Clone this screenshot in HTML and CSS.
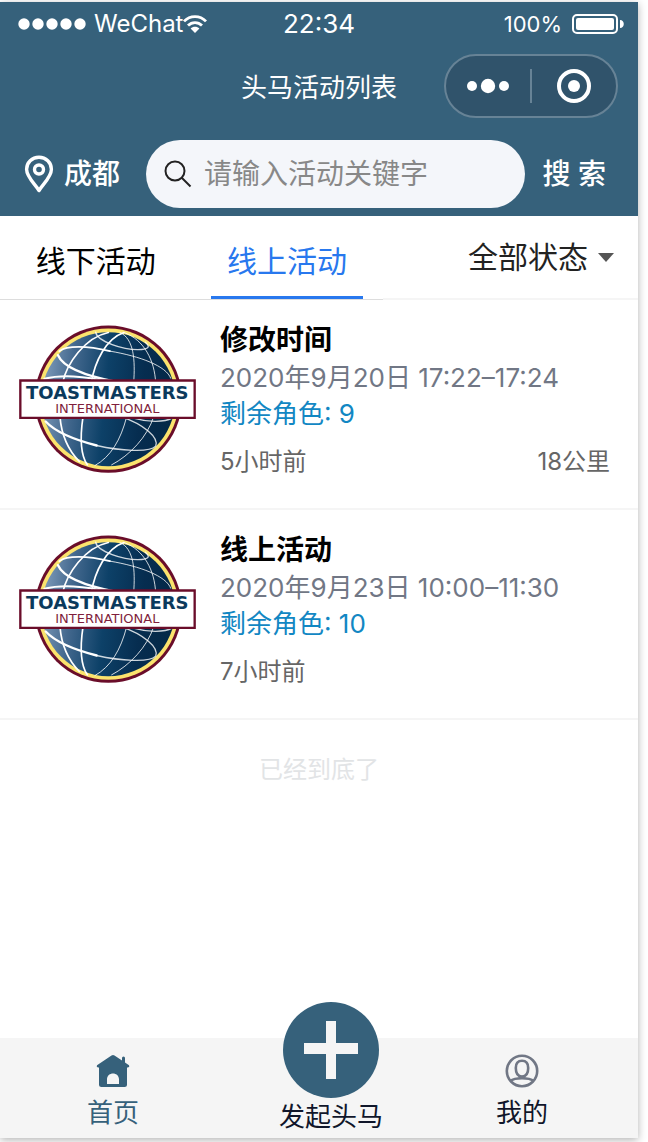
FILE: index.html
```html
<!doctype html>
<html lang="zh-CN">

<head>

<meta charset="utf-8">
<title>头马活动列表</title>

<meta name="viewport" content="width=device-width, initial-scale=1">

<link rel="stylesheet" href="styles.css">

</head>

<body>

<!-- logo shared by all list items -->
<svg class="defs" width="0" height="0" aria-hidden="true">
    <defs>
    <linearGradient id="globe" x1="0" y1="0.4" x2="1" y2="0.5">
        <stop offset="0" stop-color="#7f9cba"/>
        <stop offset="0.22" stop-color="#43688e"/>
        <stop offset="0.48" stop-color="#0d4168"/>
        <stop offset="0.75" stop-color="#062d50"/>
        <stop offset="1" stop-color="#052846"/>
    </linearGradient>
    <symbol id="logo" viewBox="57 75 531 443">
        <circle cx="325" cy="297" r="221" fill="#6a0d2a"/>
        <circle cx="325" cy="297" r="212" fill="#fbe36d"/>
        <circle cx="325" cy="297" r="201" fill="url(#globe)"/>
        <g fill="none" stroke="#fff" stroke-linecap="round">
        <path stroke-width="5" d="M325 97C255 112 200 190 188 248M180 350C184 400 205 450 238 484"/>
        <path stroke-width="5" d="M372 97C318 115 284 185 274 248M249 350C240 410 242 465 262 494"/>
        <path stroke-width="3" opacity="0.8" d="M360 97C402 115 406 180 401 248M380 350C362 420 332 470 285 496"/>
        <path stroke-width="3" opacity="0.8" d="M375 98C432 120 464 180 467 248M461 350C442 410 390 465 335 494"/>
        <path stroke-width="4" opacity="0.8" d="M287 96C290 122 370 152 425 148C448 146 450 138 436 126"/>
        <path stroke-width="7" d="M174 165C190 202 250 226 350 245"/>
        <path stroke-width="5" d="M178 153C200 136 260 136 330 153"/>
        <path stroke-width="3" opacity="0.8" d="M330 153C420 168 500 198 512 234"/>
        <path stroke-width="6" d="M133 236C180 224 255 226 325 246"/>
        <path stroke-width="7" d="M137 364C165 394 220 418 290 436"/>
        <path stroke-width="4" opacity="0.8" d="M290 436C360 452 450 458 467 438C478 412 430 372 365 350M400 354C445 367 495 366 516 354"/>
        </g>
        <path fill="#fff" stroke="#6a0d2a" stroke-width="7" d="M61 241H584V353H61z"/>
        <text class="logo-name" x="322" y="297">TOASTMASTERS</text>
        <text class="logo-sub" x="322" y="338">INTERNATIONAL</text>
    </symbol>
    </defs>
</svg>

<div class="page">

<header class="header">
    <div class="status">
        <div class="carrier">
            <svg width="68" height="12" viewBox="0 0 68 12" fill="#fff" aria-hidden="true">
                <circle cx="6" cy="6" r="5.7"/>
                <circle cx="20" cy="6" r="5.7"/>
                <circle cx="34" cy="6" r="5.7"/>
                <circle cx="48" cy="6" r="5.7"/>
                <circle cx="62" cy="6" r="5.7"/>
            </svg>
            <span class="carrier-name">WeChat</span>
            <svg width="24" height="18" viewBox="0 0 24 18" fill="none" stroke="#fff" stroke-width="2.8" aria-hidden="true">
                <path d="M1 6.4C7-.1 17-.1 23 6.4M5 10.6C9 6.6 15 6.6 19 10.6"/>
                <path fill="#fff" stroke="none" d="M12 18L7.6 13.6C10 11.2 14 11.2 16.4 13.6z"/>
            </svg>
        </div>
        <div class="clock">22:34</div>
        <div class="power">
            <span>100%</span>
            <svg width="52" height="20" viewBox="0 0 52 20" aria-hidden="true">
                <rect x="1" y="1" width="44" height="18" rx="4" fill="none" stroke="#fff" stroke-width="2"/>
                <rect x="4" y="4" width="38" height="12" rx="2" fill="#fff"/>
                <path fill="#fff" d="M48 6C53 6 53 14 48 14z"/>
            </svg>
        </div>
    </div>

    <div class="navbar">
        <h1 class="title">头马活动列表</h1>
        <div class="capsule">
            <button class="capsule-btn" type="button" aria-label="更多">
                <svg width="44" height="16" viewBox="0 0 44 16" fill="#fff">
                    <circle cx="6" cy="8" r="5"/>
                    <circle cx="22" cy="8" r="7.2"/>
                    <circle cx="38" cy="8" r="5"/>
                </svg>
            </button>
            <button class="capsule-btn" type="button" aria-label="关闭">
                <svg width="34" height="34" viewBox="0 0 34 34">
                    <circle cx="17" cy="17" r="15" fill="none" stroke="#fff" stroke-width="4"/>
                    <circle cx="17" cy="17" r="6" fill="#fff"/>
                </svg>
            </button>
        </div>
    </div>

    <form class="search">
        <a class="city" href="#city">
            <svg width="30" height="38" viewBox="0 0 30 38" fill="none" stroke="#fff" stroke-width="3.4" aria-hidden="true">
                <path stroke-linejoin="round" d="M15 35.5C11 29 2.6 22 2.6 14.2C2.6 7.5 8 2.2 15 2.2S27.4 7.5 27.4 14.2C27.4 22 19 29 15 35.5z"/>
                <circle cx="15" cy="14.5" r="4.5"/>
            </svg>
            成都
        </a>
        <label class="search-box">
            <svg width="28" height="28" viewBox="0 0 28 28" fill="none" stroke="#222" stroke-width="2" aria-label="搜索">
                <circle cx="11" cy="11" r="9.5"/>
                <path d="M17.5 17.5L26.5 26.5"/>
            </svg>
            <input class="search-input" type="text" placeholder="请输入活动关键字">
        </label>
        <button class="search-btn" type="submit">搜 索</button>
    </form>
</header>

<div class="filters">
    <nav class="tabs">
        <a class="tab" href="#offline">线下活动</a>
        <a class="tab active" href="#online">线上活动</a>
    </nav>
    <div class="state">
        <select class="state-select" aria-label="状态">
            <option>全部状态</option>
        </select>
        <svg width="16" height="9" viewBox="0 0 16 9" fill="#555" aria-hidden="true">
            <path d="M0 0H16L8 9z"/>
        </svg>
    </div>
</div>

<main class="main">
    <a class="item" href="#event1">
        <svg class="logo" role="img" aria-label="Toastmasters International"><use href="#logo"/></svg>
        <div class="info">
            <h2 class="name">修改时间</h2>
            <div class="date">2020年9月20日 17:22–17:24</div>
            <div class="roles">剩余角色: 9</div>
            <div class="meta"><span>5小时前</span><span>18公里</span></div>
        </div>
    </a>
    <a class="item" href="#event2">
        <svg class="logo" role="img" aria-label="Toastmasters International"><use href="#logo"/></svg>
        <div class="info">
            <h2 class="name">线上活动</h2>
            <div class="date">2020年9月23日 10:00–11:30</div>
            <div class="roles">剩余角色: 10</div>
            <div class="meta"><span>7小时前</span></div>
        </div>
    </a>
    <p class="end">已经到底了</p>
</main>

<nav class="tabbar">
    <a class="tabbar-item current" href="#home">
        <svg width="34" height="34" viewBox="0 0 34 34" fill="#36617b" aria-hidden="true">
            <path d="M15.5 1.6Q17 .6 18.5 1.6L26 6.5V4Q26 2.5 27.5 2.5T29 4V8.5L33 11.2Q34 13 32 13.5H31V30.5Q31 33 28.5 33H5.5Q3 33 3 30.5V13.5H2Q0 13 1 11.2zM11 30H23V25.5C23 17.5 11 17.5 11 25.5z"/>
        </svg>
        首页
    </a>
    <a class="tabbar-item add" href="#create">
        <svg width="96" height="96" viewBox="0 0 96 96" aria-hidden="true">
            <circle cx="48" cy="48" r="48" fill="#36617b"/>
            <path fill="#f5f5f5" d="M43 19H53V41H75V52H53V77H43V52H21V41H43z"/>
        </svg>
        发起头马
    </a>
    <a class="tabbar-item" href="#mine">
        <svg width="34" height="34" viewBox="0 0 34 34" fill="none" stroke="#717785" stroke-width="2.6" aria-hidden="true">
            <circle cx="17" cy="17" r="15.2"/>
            <path d="M17 6.8C12.500 6.800 10.800 10 10.800 14C10.800 18.500 12.500 22.500 17 22.500S23.200 18.500 23.200 14C23.200 10 21.500 6.800 17 6.800zM5 27C8 25 13 24.300 17 24.300S26 25 29 27"/>
        </svg>
        我的
    </a>
</nav>

</div>

</body>
</html>
```

FILE: styles.css
```css
* {
    box-sizing: border-box;
}
body {
    margin: 0;
    background-color: white;
    font-family: Inter, "Noto Sans CJK SC", sans-serif;
    font-size: 26px;
    line-height: 36px;
    color: black;
}
a {
    color: inherit;
    text-decoration: none;
}
svg {
    display: block;
    flex-shrink: 0;
}
h1, h2, p {
    margin: 0;
}
button, input, select {
    border: 0;
    padding: 0;
    margin: 0;
    background: none;
    color: inherit;
    font: inherit;
}

.defs {
    position: absolute;
}
.page {
    display: flex;
    flex-direction: column;
    min-height: calc(100vh - 6px);
    margin: 2px 10px 4px 0;
    background-color: white;
    box-shadow: 0 2px 8px rgba(0, 0, 0, 0.3);
}

/* header */
.header {
    background-color: #36617b;
    color: white;
}
.status {
    display: grid;
    grid-template-columns: 1fr auto 1fr;
    align-items: center;
    height: 44px;
    padding: 0 14px;
}
.carrier {
    display: flex;
    align-items: center;
    padding-left: 4px;
    font-size: 24px;
}
.carrier-name {
    margin-left: 8px;
}
.clock {
    font-size: 26px;
}
.power {
    display: flex;
    align-items: center;
    justify-content: flex-end;
    gap: 10px;
    font-size: 22px;
}
.navbar {
    display: grid;
    grid-template-columns: 1fr auto 1fr;
    align-items: center;
    height: 80px;
    padding: 0 20px;
}
.title {
    grid-column: 2;
    padding-top: 4px;
    font-size: 26px;
    font-weight: 400;
}
.capsule {
    display: flex;
    align-items: center;
    justify-self: end;
    width: 174px;
    height: 64px;
    border: 2px solid #678396;
    border-radius: 32px;
    background-color: #30536b;
}
.capsule-btn {
    display: flex;
    flex: 1;
    align-items: center;
    justify-content: center;
    height: 34px;
}
.capsule-btn + .capsule-btn {
    border-left: 2px solid #678396;
}
.search {
    display: flex;
    align-items: center;
    padding: 14px 32px 8px 24px;
    font-size: 28px;
    font-weight: 500;
    white-space: nowrap;
}
.city {
    display: flex;
    align-items: center;
    gap: 10px;
}
.search-box {
    display: flex;
    flex: 1;
    align-items: center;
    gap: 12px;
    min-width: 0;
    height: 68px;
    margin: 0 18px 0 26px;
    padding: 0 18px;
    border-radius: 34px;
    background-color: #f4f6fa;
}
.search-input {
    flex: 1;
    min-width: 0;
    color: #222;
    font-weight: 400;
    outline: none;
}
.search-input::placeholder {
    color: #888;
}

/* filters */
.filters {
    display: flex;
    height: 84px;
    font-size: 30px;
}
.tabs {
    display: flex;
    justify-content: space-around;
    width: 60%;
    border-bottom: 1px solid #ddd;
}
.tab {
    padding: 27px 16px 17px;
    border-bottom: 3px solid transparent;
}
.tab.active {
    border-bottom-color: #2878ee;
    color: #2878ee;
}
.state {
    display: flex;
    flex: 1;
    align-items: center;
    justify-content: flex-end;
    gap: 10px;
    padding-right: 24px;
    border-bottom: 2px solid #f5f5f5;
    color: #222;
}
.state-select {
    appearance: none;
}

/* list */
.main {
    flex: 1;
}
.item {
    display: flex;
    gap: 24px;
    height: 210px;
    padding: 20px 28px 0 19px;
    border-bottom: 2px solid #f5f5f5;
}
.logo {
    width: 177px;
    height: 148px;
    margin-top: 5px;
}
.logo-name {
    font: bold 54px "DejaVu Sans", sans-serif;
    fill: #0b3a5d;
    text-anchor: middle;
}
.logo-sub {
    font: 39px "DejaVu Sans", sans-serif;
    fill: #7f1f3d;
    text-anchor: middle;
}
.info {
    flex: 1;
}
.name {
    font-size: 28px;
    font-weight: 700;
    line-height: 40px;
}
.date {
    color: #717785;
}
.roles {
    color: #1287c3;
}
.meta {
    display: flex;
    justify-content: space-between;
    margin-top: 12px;
    color: #666;
    font-size: 24px;
}
.end {
    padding-top: 32px;
    color: #e2e4e6;
    font-size: 24px;
    text-align: center;
}

/* bottom bar */
.tabbar {
    display: grid;
    grid-template-columns: 226fr 210fr 172fr;
    grid-template-rows: minmax(0, 1fr);
    align-items: end;
    height: 100px;
    padding: 0 30px 3px 0;
    background-color: #f5f5f5;
    color: #10162a;
}
.tabbar-item {
    display: flex;
    flex-direction: column;
    align-items: center;
    gap: 7px;
    padding-bottom: 4px;
}
/* the round button sticks out above the bar */
.tabbar-item.add {
    gap: 1px;
    padding-bottom: 0;
}
.tabbar-item.current {
    color: #36617b;
}
```
